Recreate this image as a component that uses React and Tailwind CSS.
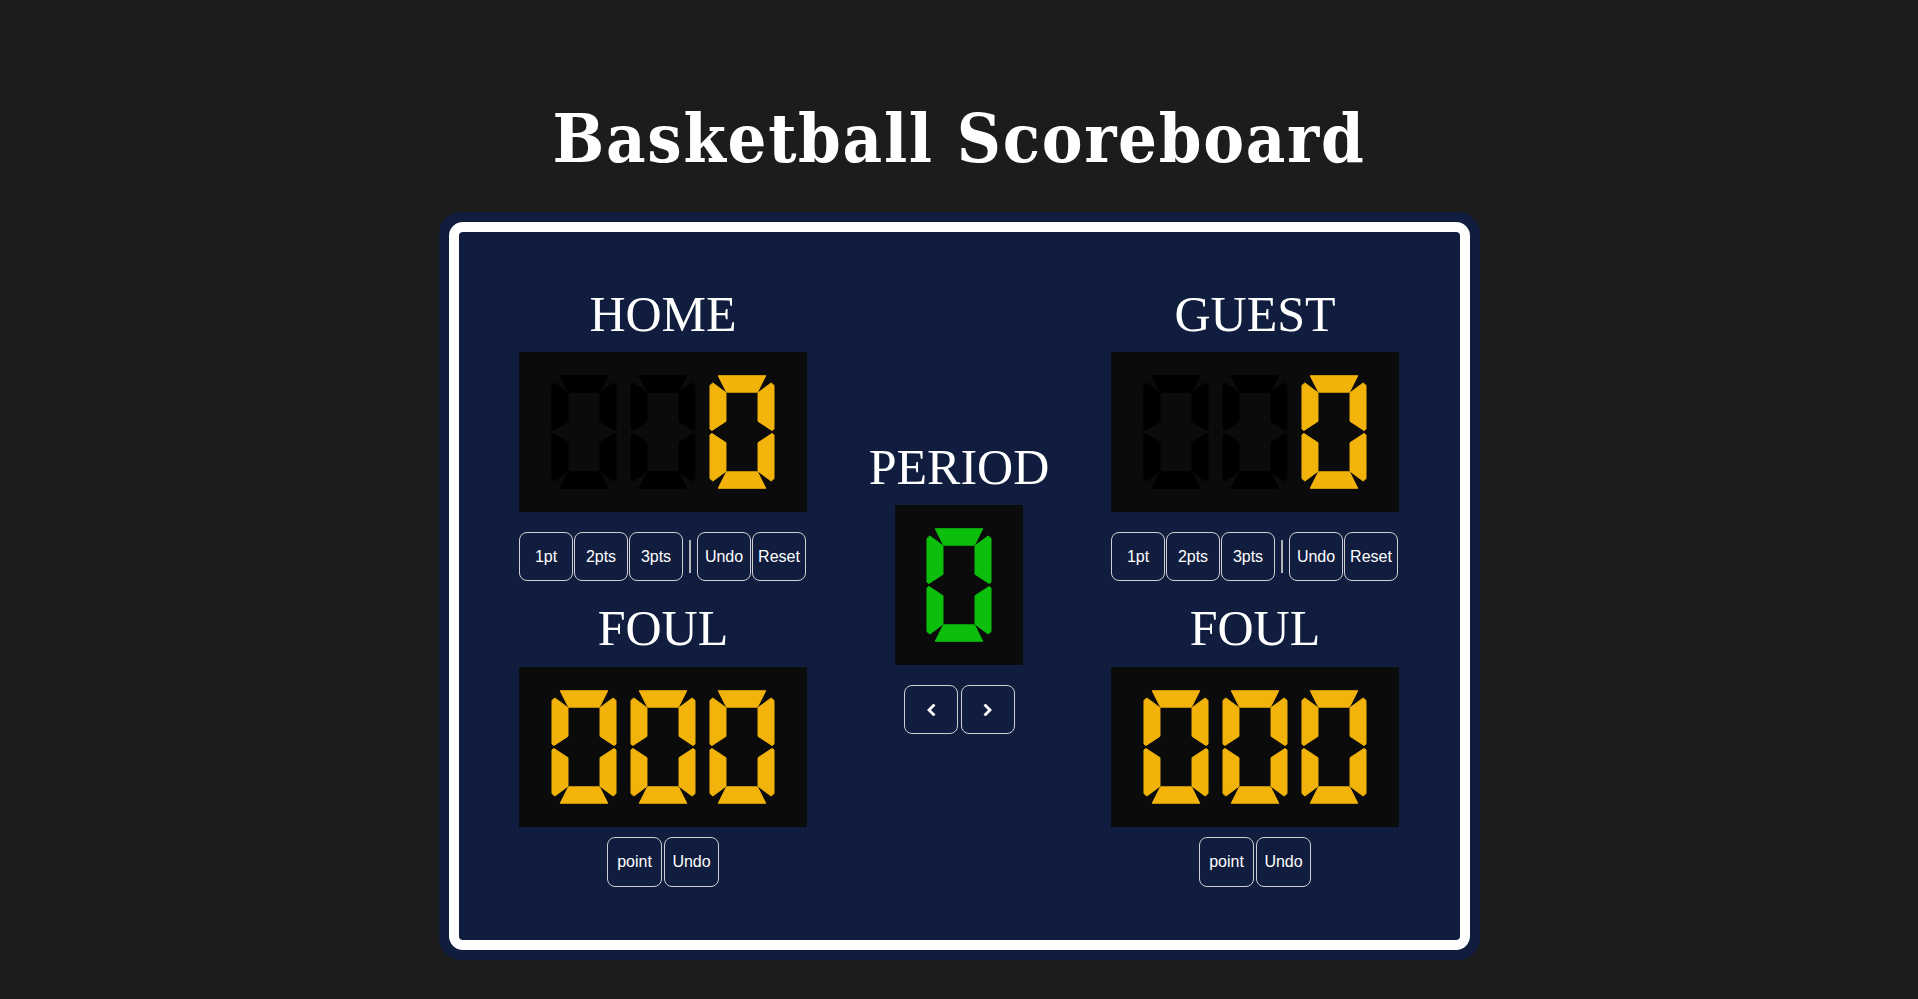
import { useState } from "react";

const SEGMENTS = [
  "8.5,0 57.5,0 49,17 17,17",
  "0,10 3,7.5 16.5,17.5 16.5,47 2,56.5 0,55",
  "66,10 63,7.5 49.5,17.5 49.5,47 64,56.5 66,55",
  "0,106 3,108.5 16.5,98.5 16.5,69 2,59.5 0,61",
  "66,106 63,108.5 49.5,98.5 49.5,69 64,59.5 66,61",
  "8.5,116 57.5,116 49,99 17,99",
];

// only the "0" shape is ever shown, lit or dark
const Digit = ({ color }) => {
  return (
    <svg width="66" height="116" viewBox="-1 -1 68 118" className="shrink-0">
      {SEGMENTS.map((pts, i) => (
        <polygon
          key={i}
          points={pts}
          fill={color}
          stroke={color}
          strokeWidth="1"
          strokeLinejoin="round"
        />
      ))}
    </svg>
  );
};

const Btn = ({ children, className = "", onClick }) => {
  return (
    <button
      onClick={onClick}
      className={
        "h-[49px] rounded-[8px] border border-[#cfcfcf] text-white text-[16px] flex items-center justify-center " +
        className
      }
      style={{ fontFamily: '"Liberation Sans", Arial, sans-serif' }}
    >
      {children}
    </button>
  );
};

const Title = ({ children }) => {
  return (
    <h2
      className="text-white text-[50px] leading-[50px] h-[50px] font-normal"
      style={{ fontFamily: '"Liberation Serif", "Times New Roman", serif' }}
    >
      {children}
    </h2>
  );
};

const Team = ({ name }) => {
  const [score, setScore] = useState(0);

  return (
    <div className="flex flex-col items-center">
      <Title>{name}</Title>
      <div className="mt-[13px]">
        <div className="w-[288px] h-[160px] bg-[#0b0b0b] flex items-center justify-center gap-[13px]">
          <Digit color="#000000" />
          <Digit color="#000000" />
          <Digit color="#f2b30b" />
        </div>
      </div>
      <div className="mt-[20px] flex items-center w-[288px]">
        <Btn className="w-[54px]" onClick={() => setScore(score + 1)}>1pt</Btn>
        <Btn className="w-[54px] ml-[1px]">2pts</Btn>
        <Btn className="w-[54px] ml-[1px]">3pts</Btn>
        <div className="w-[2px] h-[33px] bg-[#b4b4b4] mx-[6px]"></div>
        <Btn className="w-[54px]">Undo</Btn>
        <Btn className="w-[54px] ml-[1px]">Reset</Btn>
      </div>
      <div className="mt-[22px]">
        <Title>FOUL</Title>
      </div>
      <div className="mt-[14px]">
        <div className="w-[288px] h-[160px] bg-[#0b0b0b] flex items-center justify-center gap-[13px]">
          <Digit color="#f2b30b" />
          <Digit color="#f2b30b" />
          <Digit color="#f2b30b" />
        </div>
      </div>
      <div className="mt-[10px] flex gap-[2px]">
        <Btn className="w-[55px] h-[50px]">point</Btn>
        <Btn className="w-[55px] h-[50px]">Undo</Btn>
      </div>
    </div>
  );
};

const Chevron = ({ dir }) => {
  return (
    <svg width="10" height="12" viewBox="0 0 10 12">
      <path
        d={dir === "left" ? "M7.5 1.5 L3 6 L7.5 10.5" : "M2.5 1.5 L7 6 L2.5 10.5"}
        fill="none"
        stroke="white"
        strokeWidth="2.8"
        strokeLinecap="square"
      />
    </svg>
  );
};

export default function App() {
  return (
    <div className="min-h-screen w-full bg-[#1c1c1c] flex flex-col items-center pt-[104px] pb-[37px]">
      <h1
        className="text-white text-[68px] leading-none font-bold tracking-[1.7px]"
        style={{ fontFamily: '"DejaVu Serif Condensed", "DejaVu Serif", Georgia, serif' }}
      >
        Basketball Scoreboard
      </h1>

      {/* board */}
      <div className="mt-[40px] w-[1041px] bg-[#101d3e] rounded-[22px] p-[10px]">
        <div className="border-[10px] border-white rounded-[14px] bg-[#101d3e] pt-[57px] pb-[53px]">
          <div className="grid grid-cols-[288px_288px_288px] gap-x-2 justify-center items-center">
            <Team name="HOME" />

            {/* period */}
            <div className="flex flex-col items-center">
              <Title>PERIOD</Title>
              <div className="mt-[13px] w-[128px] h-[160px] bg-[#0b0b0b] flex items-center justify-center">
                <Digit color="#0dbf0d" />
              </div>
              <div className="mt-[20px] flex gap-[3px]">
                <Btn className="w-[54px]">
                  <Chevron dir="left" />
                </Btn>
                <Btn className="w-[54px]">
                  <Chevron dir="right" />
                </Btn>
              </div>
            </div>

            <Team name="GUEST" />
          </div>
        </div>
      </div>
    </div>
  );
}
